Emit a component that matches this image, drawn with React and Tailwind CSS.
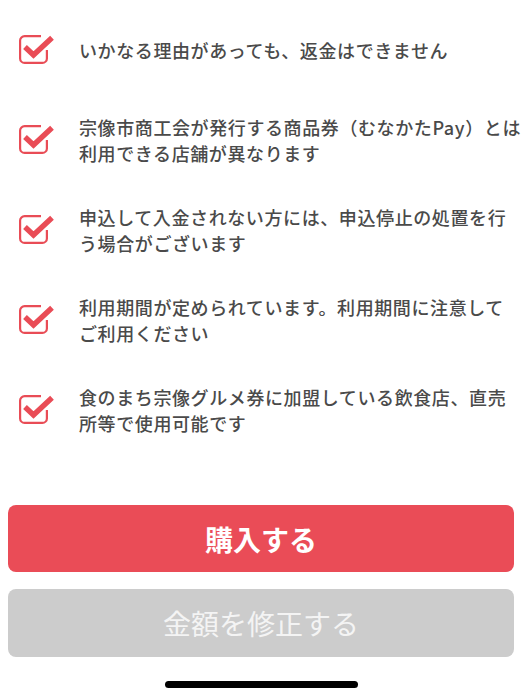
import React from 'react';

const NOTES = [
  ['いかなる理由があっても、返金はできません'],
  ['宗像市商工会が発行する商品券（むなかたPay）とは', '利用できる店舗が異なります'],
  ['申込して入金されない方には、申込停止の処置を行', 'う場合がございます'],
  ['利用期間が定められています。利用期間に注意して', 'ご利用ください'],
  ['食のまち宗像グルメ券に加盟している飲食店、直売', '所等で使用可能です'],
];

function CheckIcon() {
  return (
    <svg width="36" height="30" viewBox="0 0 36 30" className="shrink-0">
      <path
        d="M22 2.1H5.6a4.5 4.5 0 0 0-4.5 4.5V24.4a4.5 4.5 0 0 0 4.5 4.5H23.4a4.5 4.5 0 0 0 4.5-4.5V16"
        fill="none"
        stroke="#e94c56"
        strokeWidth="2.2"
      />
      <path
        d="M6 13L14.5 21L33 3.8"
        fill="none"
        stroke="#e94c56"
        strokeWidth="5.4"
        strokeLinejoin="miter"
      />
    </svg>
  );
}

export default function App() {
  return (
    <div
      className="w-[522px] h-[700px] bg-white flex flex-col"
      style={{ fontFamily: '"Noto Sans CJK JP", "Noto Sans", sans-serif' }}
    >
      <ul className="pt-[5px] pl-[19px]">
        {NOTES.map((lines, i) => (
          <li key={i} className="h-[90px] flex items-center">
            <div className="mb-[3px]">
              <CheckIcon />
            </div>
            <p className="ml-[24px] text-[18px] leading-[26px] tracking-[0.6px] font-medium text-[#4a4a4a] whitespace-nowrap">
              {lines.map((l, j) => (
                <React.Fragment key={j}>
                  {j > 0 && <br />}
                  {l}
                </React.Fragment>
              ))}
            </p>
          </li>
        ))}
      </ul>

      <div className="mt-[50px] px-[8px] flex flex-col gap-[17px]">
        <button className="h-[67px] rounded-[8px] bg-[#ea4c57] text-white text-[28px] font-bold">
          購入する
        </button>
        <button className="h-[68px] rounded-[8px] bg-[#cccccc] text-[#f4f4f4] text-[28px]">
          金額を修正する
        </button>
      </div>

      <div className="mt-[24px] flex justify-center">
        <div className="w-[193px] h-[7px] rounded-full bg-black" />
      </div>
    </div>
  );
}
